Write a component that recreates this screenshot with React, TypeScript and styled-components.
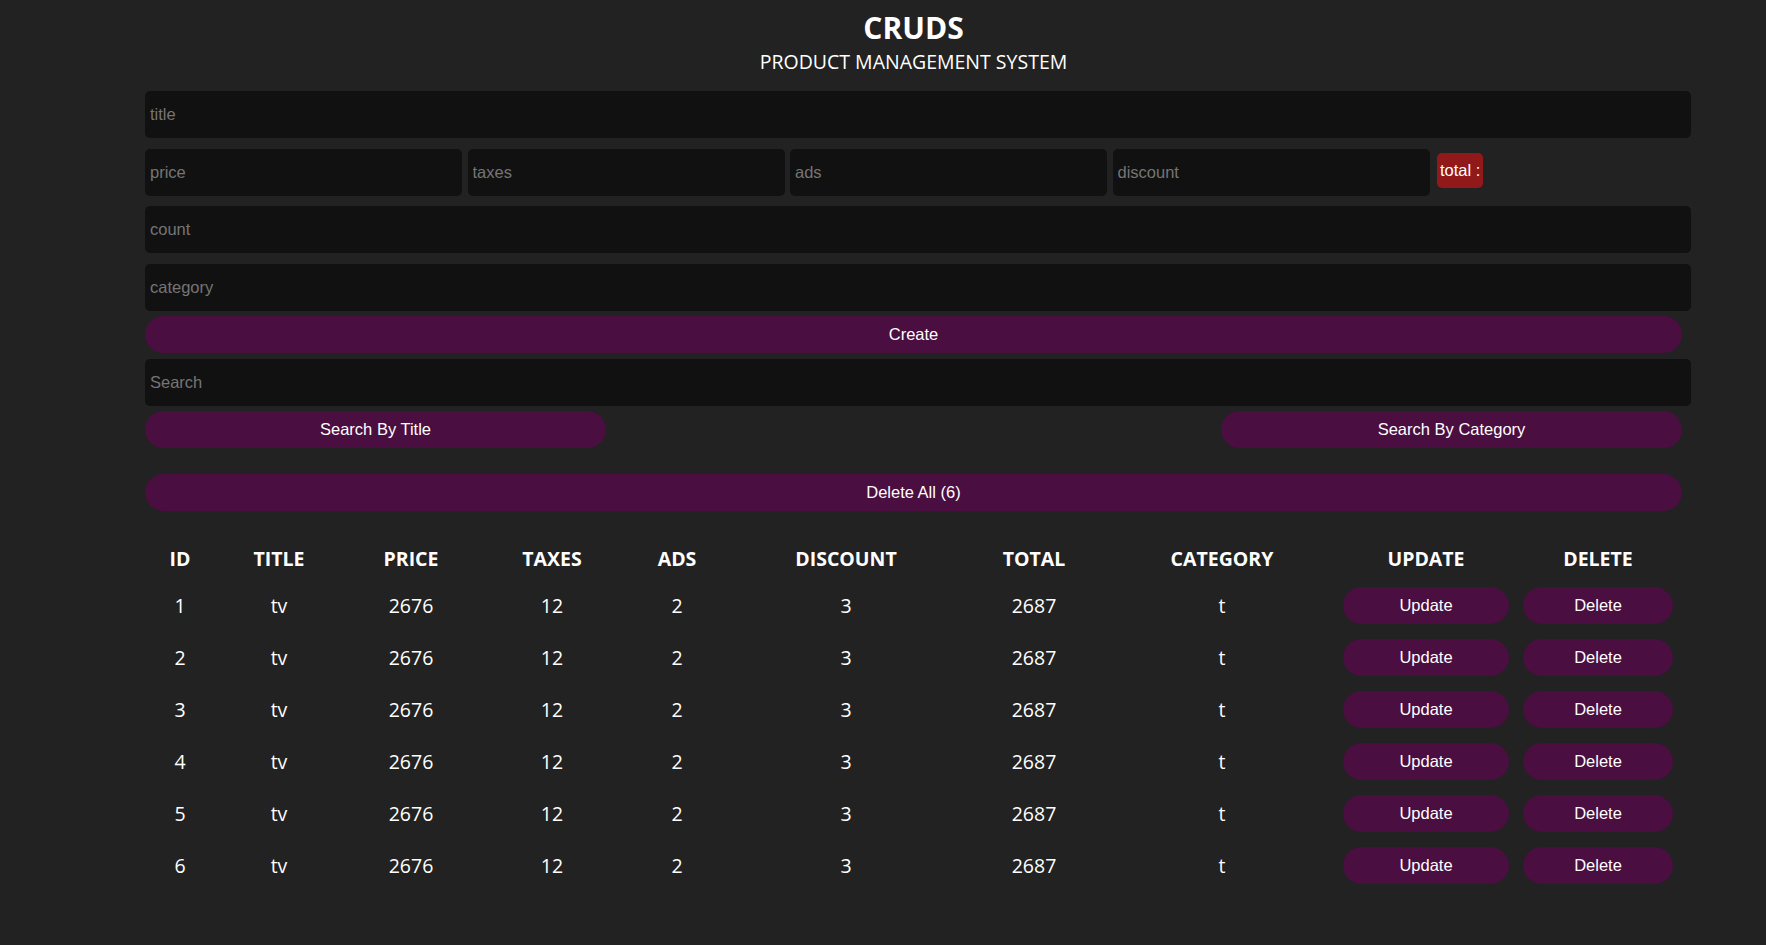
import React from 'react'
import styled, { createGlobalStyle } from 'styled-components'

interface Product {
	id: number
	title: string
	price: number
	taxes: number
	ads: number
	discount: number
	total: number
	category: string
}

const products: Product[] = [1, 2, 3, 4, 5, 6].map(id => ({
	id,
	title: 'tv',
	price: 2676,
	taxes: 12,
	ads: 2,
	discount: 3,
	total: 2687,
	category: 't',
}))

const columns = [
	{ label: 'ID', width: 70 },
	{ label: 'TITLE', width: 128 },
	{ label: 'PRICE', width: 136 },
	{ label: 'TAXES', width: 146 },
	{ label: 'ADS', width: 104 },
	{ label: 'DISCOUNT', width: 234 },
	{ label: 'TOTAL', width: 142 },
	{ label: 'CATEGORY', width: 234 },
	{ label: 'UPDATE', width: 174 },
	{ label: 'DELETE', width: 170 },
]

const GlobalStyle = createGlobalStyle`
	html, body {
		margin: 0;
		padding: 0;
		background: #222;
		color: #fff;
		font-family: 'Open Sans', 'Noto Sans', sans-serif;
	}
`

const Crud = styled.div`
	width: 1537px;
	margin-left: 145px;
	padding-top: 10px;
	display: flex;
	flex-direction: column;
	gap: 5.5px;
`

const Head = styled.div`
	text-align: center;
	margin-bottom: 10.5px;

	h2 {
		margin: 0;
		font-size: 30px;
		line-height: 36px;
		font-weight: 700;
	}

	p {
		margin: 3px 0 0;
		font-size: 19.5px;
		line-height: 26px;
	}
`

const Inputs = styled.div`
	display: flex;
	flex-direction: column;
	gap: 10.5px;
`

// inputs stick out 9px past the buttons, like content-box width:100% + padding
const Field = styled.input<{ $width?: number }>`
	box-sizing: border-box;
	width: ${p => (p.$width ? `${p.$width}px` : 'calc(100% + 9px)')};
	height: 47px;
	padding: 0 5px;
	border: none;
	outline: none;
	border-radius: 5px;
	background: #111;
	color: #fff;
	font-family: 'Liberation Sans', Arial, sans-serif;
	font-size: 16.5px;

	&::placeholder {
		color: #757575;
	}
`

const PriceRow = styled.div`
	display: flex;
	align-items: flex-start;
	gap: 5.5px;
`

const Total = styled.small`
	margin: 4px 0 0 2px;
	padding: 0 3px;
	height: 35px;
	display: flex;
	align-items: center;
	border-radius: 5px;
	background: #921919;
	font-family: 'Liberation Sans', Arial, sans-serif;
	font-size: 16.5px;
`

const Button = styled.button<{ $width?: number; $spaced?: boolean }>`
	box-sizing: border-box;
	width: ${p => (p.$width ? `${p.$width}px` : '100%')};
	height: 37px;
	margin-top: ${p => (p.$spaced ? '20px' : '0')};
	border: none;
	border-radius: 20px;
	background: #4a0e40;
	color: #fff;
	font-family: 'Liberation Sans', Arial, sans-serif;
	font-size: 16.5px;
	cursor: pointer;
`

const SearchRow = styled.div`
	display: flex;
	justify-content: space-between;
`

const Table = styled.table`
	width: 1538px;
	margin-top: 20.5px;
	table-layout: fixed;
	border-collapse: collapse;
	text-align: center;

	th {
		height: 43px;
		padding: 0;
		font-size: 19.5px;
		font-weight: 700;
	}

	td {
		height: 52px;
		padding: 0;
		font-size: 19.5px;
	}
`

const App: React.FC = () => {
	return (
		<>
			<GlobalStyle />
			<Crud>
				<Head>
					<h2>CRUDS</h2>
					<p>PRODUCT MANAGEMENT SYSTEM</p>
				</Head>

				<Inputs>
					<Field placeholder="title" />
					<PriceRow>
						<Field $width={317} placeholder="price" />
						<Field $width={317} placeholder="taxes" />
						<Field $width={317} placeholder="ads" />
						<Field $width={317} placeholder="discount" />
						<Total>total :</Total>
					</PriceRow>
					<Field placeholder="count" />
					<Field placeholder="category" />
				</Inputs>

				<Button>Create</Button>
				<Field placeholder="Search" />
				<SearchRow>
					<Button $width={461}>Search By Title</Button>
					<Button $width={461}>Search By Category</Button>
				</SearchRow>
				<Button $spaced>Delete All ({products.length})</Button>

				<Table>
					<colgroup>
						{columns.map(col => (
							<col key={col.label} style={{ width: col.width }} />
						))}
					</colgroup>
					<thead>
						<tr>
							{columns.map(col => (
								<th key={col.label}>{col.label}</th>
							))}
						</tr>
					</thead>
					<tbody>
						{products.map(product => (
							<tr key={product.id}>
								<td>{product.id}</td>
								<td>{product.title}</td>
								<td>{product.price}</td>
								<td>{product.taxes}</td>
								<td>{product.ads}</td>
								<td>{product.discount}</td>
								<td>{product.total}</td>
								<td>{product.category}</td>
								<td>
									<Button $width={166}>Update</Button>
								</td>
								<td>
									<Button $width={150}>Delete</Button>
								</td>
							</tr>
						))}
					</tbody>
				</Table>
			</Crud>
		</>
	)
}

export default App
